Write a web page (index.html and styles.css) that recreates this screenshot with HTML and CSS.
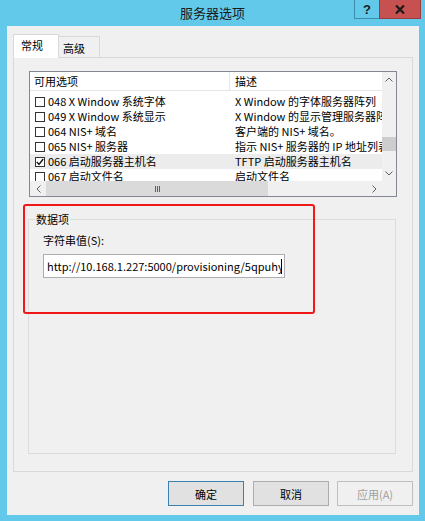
FILE: index.html
```html
<!DOCTYPE html>
<html lang="zh-CN">
<head>
<meta charset="utf-8">
<title>服务器选项</title>
<link rel="stylesheet" href="styles.css">
</head>
<body>
<div class="window">
  <div class="titlebar">
    <div class="tb-spacer"></div>
    <div class="title">服务器选项</div>
    <div class="controls">
      <div class="ctl help">?</div>
      <div class="ctl close">
        <svg width="10" height="9" viewBox="0 0 10 9"><path d="M1 0.5 L9 8.5 M9 0.5 L1 8.5" stroke="#1a1a1a" stroke-width="2.2" fill="none"/></svg>
      </div>
    </div>
  </div>
  <div class="dialog">
    <div class="tabs">
      <div class="tab active">常规</div>
      <div class="tab">高级</div>
    </div>
    <div class="panel">
      <div class="listbox">
        <div class="lv-main">
          <div class="lv-header">
            <div class="col1 hcell">可用选项</div>
            <div class="col2 hcell">描述</div>
          </div>
          <div class="lv-rows">
            <div class="row"><div class="col1"><span class="cb"></span>048 X Window 系统字体</div><div class="col2">X Window 的字体服务器阵列</div></div>
            <div class="row"><div class="col1"><span class="cb"></span>049 X Window 系统显示</div><div class="col2">X Window 的显示管理服务器阵列</div></div>
            <div class="row"><div class="col1"><span class="cb"></span>064 NIS+ 域名</div><div class="col2">客户端的 NIS+ 域名。</div></div>
            <div class="row"><div class="col1"><span class="cb"></span>065 NIS+ 服务器</div><div class="col2">指示 NIS+ 服务器的 IP 地址列表</div></div>
            <div class="row sel"><div class="col1"><span class="cb"><svg width="8" height="8" viewBox="0 0 8 8"><path d="M0.8 4 L3 6.4 L7.2 1" stroke="#1a1a1a" stroke-width="1.5" fill="none"/></svg></span>066 启动服务器主机名</div><div class="col2">TFTP 启动服务器主机名</div></div>
            <div class="row"><div class="col1"><span class="cb"></span>067 启动文件名</div><div class="col2">启动文件名</div></div>
          </div>
        </div>
        <div class="vscroll">
          <div class="sb-btn"><svg width="8" height="5" viewBox="0 0 8 5"><path d="M0.5 4.5 L4 1 L7.5 4.5" stroke="#606060" fill="none"/></svg></div>
          <div class="sb-track v-top"></div>
          <div class="sb-thumb v-thumb"></div>
          <div class="sb-track v-bot"></div>
          <div class="sb-btn"><svg width="8" height="5" viewBox="0 0 8 5"><path d="M0.5 0.5 L4 4 L7.5 0.5" stroke="#606060" fill="none"/></svg></div>
        </div>
        <div class="hscroll">
          <div class="sb-btn"><svg width="5" height="8" viewBox="0 0 5 8"><path d="M4.5 0.5 L1 4 L4.5 7.5" stroke="#606060" fill="none"/></svg></div>
          <div class="sb-thumb h-thumb"><span class="grip"></span><span class="grip"></span><span class="grip"></span></div>
          <div class="sb-track h-track"></div>
          <div class="sb-btn"><svg width="5" height="8" viewBox="0 0 5 8"><path d="M0.5 0.5 L4 4 L0.5 7.5" stroke="#606060" fill="none"/></svg></div>
        </div>
        <div class="corner"></div>
      </div>
      <div class="group">
        <div class="group-title">数据项</div>
        <div class="field-label">字符串值(S):</div>
        <div class="textbox"><span class="value">http://10.168.1.227:5000/provisioning/5qpuhy</span><span class="caret"></span></div>
      </div>
    </div>
    <div class="buttons">
      <div class="btn default">确定</div>
      <div class="btn">取消</div>
      <div class="btn disabled">应用(A)</div>
    </div>
  </div>
  <div class="annotation"></div>
</div>
</body>
</html>
```
FILE: styles.css
```css
* { box-sizing: border-box; }
html, body { margin: 0; padding: 0; }
body {
  width: 425px;
  height: 521px;
  background: #62c9ea;
  font-family: "Noto Sans CJK SC", sans-serif;
  font-size: 11px;
  color: #000;
  overflow: hidden;
}
.window {
  position: relative;
  width: 425px;
  height: 521px;
  display: flex;
  flex-direction: column;
}
.titlebar {
  height: 26px;
  display: grid;
  grid-template-columns: 1fr auto 1fr;
  flex: none;
}
.title {
  font-size: 13px;
  line-height: 26px;
  color: #1a1a1a;
}
.controls {
  justify-self: end;
  align-self: start;
  display: flex;
  margin-right: 4px;
}
.ctl {
  height: 19px;
  display: flex;
  align-items: center;
  justify-content: center;
}
.help {
  width: 25px;
  background: #62c9ea;
  border: 1px solid #3c8cab;
  border-top: none;
  border-right: none;
  font-family: "Liberation Sans", sans-serif;
  font-weight: bold;
  font-size: 13px;
  color: #1a1a1a;
}
.close {
  width: 42px;
  background: #c75050;
  border: 1px solid #9d3c3c;
  border-top: none;
}
.dialog {
  flex: 1;
  margin: 0 6px 6px 7px;
  background: #f0f0f0;
  padding: 8px 6px 0 6px;
  display: flex;
  flex-direction: column;
}
.tabs {
  display: flex;
  align-items: flex-end;
  height: 23px;
}
.tab {
  width: 41px;
  height: 21px;
  border: 1px solid #d9d9d9;
  border-bottom: none;
  border-left: none;
  background: #f0f0f0;
  padding: 3px 0 0 4px;
  line-height: 16px;
}
.tab.active {
  width: 46px;
  height: 24px;
  margin-bottom: -1px;
  border-left: 1px solid #d9d9d9;
  background: #ffffff;
  padding: 2px 0 0 7px;
  position: relative;
}
.panel {
  height: 415px;
  border: 1px solid #d9d9d9;
  background: #f0f0f0;
  padding: 13px 15px 0 15px;
  display: flex;
  flex-direction: column;
}
.listbox {
  width: 368px;
  height: 126px;
  border: 1px solid #828790;
  background: #fff;
  display: grid;
  grid-template-columns: 352px 14px;
  grid-template-rows: 109px 15px;
}
.lv-main {
  overflow: hidden;
}
.lv-header {
  display: flex;
  height: 19px;
  border-bottom: 1px solid #e5e5e5;
}
.hcell {
  line-height: 18px;
}
.col1 {
  width: 199px;
  flex: none;
  padding-left: 4px;
  white-space: nowrap;
  overflow: hidden;
  display: flex;
  align-items: center;
}
.col2 {
  flex: 1;
  padding-left: 6px;
  white-space: nowrap;
  overflow: hidden;
}
.lv-header .col2 { border-left: 1px solid #e5e5e5; padding-left: 5px; }
.lv-rows { padding-top: 3px; }
.row {
  display: flex;
  height: 15px;
  line-height: 15px;
}
.row.sel { background: #ececec; }
.cb {
  width: 10px;
  height: 10px;
  border: 1px solid #333;
  background: #fff;
  margin-right: 3px;
  margin-left: 1px;
  display: inline-flex;
  align-items: center;
  justify-content: center;
  flex: none;
}
.vscroll {
  display: flex;
  flex-direction: column;
  background: #f0f0f0;
}
.vscroll .sb-btn { height: 15px; }
.sb-btn {
  display: flex;
  align-items: center;
  justify-content: center;
  background: #f0f0f0;
  flex: none;
}
.v-top { height: 50px; }
.v-thumb { height: 14px; }
.v-bot { flex: 1; }
.sb-track { background: #f0f0f0; }
.sb-thumb { background: #cdcdcd; }
.hscroll {
  display: flex;
  background: #f0f0f0;
}
.hscroll .sb-btn { width: 16px; }
.h-thumb {
  width: 222px;
  background: #dadada;
  display: flex;
  align-items: center;
  justify-content: center;
  gap: 1px;
}
.grip {
  width: 1px;
  height: 6px;
  background: #606060;
}
.h-track { flex: 1; }
.corner { background: #f0f0f0; }
.group {
  margin-top: 22px;
  margin-left: -1px;
  width: 368px;
  height: 235px;
  border: 1px solid #dcdcdc;
  padding: 0 0 0 14px;
}
.group-title {
  display: block;
  width: fit-content;
  margin-top: -9px;
  margin-left: -8px;
  padding: 0 1px;
  background: #f0f0f0;
  line-height: 16px;
}
.field-label {
  margin-top: 5px;
  line-height: 16px;
}
.textbox {
  margin-top: 6px;
  width: 242px;
  height: 24px;
  border: 1px solid #abadb3;
  background: #fff;
  display: flex;
  align-items: center;
  padding-left: 3px;
  overflow: hidden;
}
.value {
  white-space: nowrap;
  width: 234px;
  overflow: hidden;
  flex: none;
  line-height: 16px;
}
.caret {
  width: 1px;
  height: 15px;
  background: #000;
  flex: none;
}
.buttons {
  display: flex;
  justify-content: flex-end;
  gap: 8px;
  margin-top: 9px;
}
.btn {
  width: 76px;
  height: 25px;
  border: 1px solid #adadad;
  background: #e1e1e1;
  display: flex;
  align-items: center;
  justify-content: center;
}
.btn.default { border-color: #3c7fb1; margin-right: 1px; }
.btn.disabled {
  border-color: #bfbfbf;
  background: #f0f0f0;
  color: #a0a0a0;
}
.annotation {
  position: absolute;
  left: 23px;
  top: 204px;
  width: 292px;
  height: 110px;
  border: 2px solid #f01818;
  border-radius: 3px;
}
```
